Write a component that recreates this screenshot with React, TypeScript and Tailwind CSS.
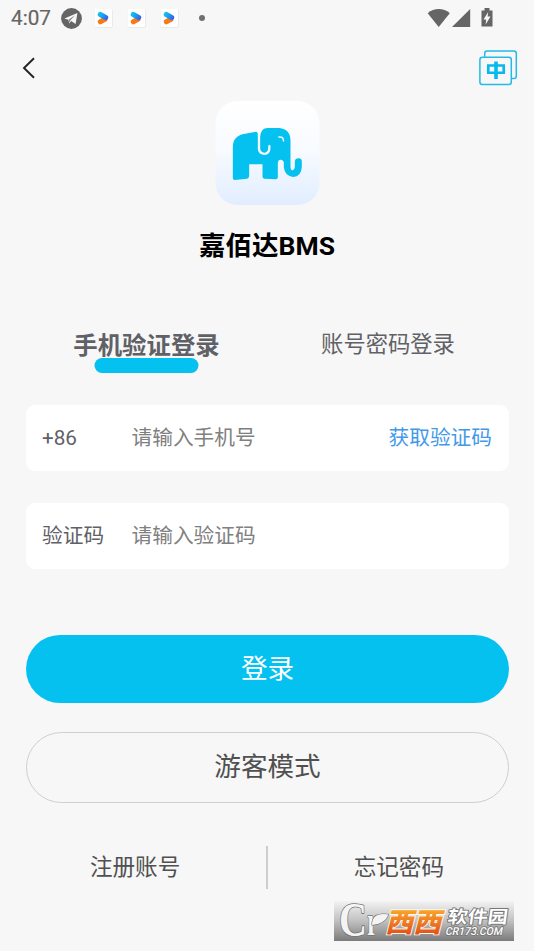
import React from "react";

const FONT = "font-['Roboto','Noto_Sans_CJK_SC',sans-serif]";

function TelegramIcon() {
  return (
    <svg className="ml-[10px] h-[21px] w-[21px]" viewBox="0 0 21 21">
      <circle cx="10.5" cy="10.5" r="10.4" fill="#656565" />
      <path d="M3.4 10.4 16.4 5 14.6 16 10.2 13 8.3 15.400 7.4 11.8Z" fill="#f7f7f7" />
      <path d="M7.8 11.6 14 7.3 9.300 12.5 8.3 15Z" fill="#8a8a8a" />
    </svg>
  );
}

function PlayBadge() {
  return (
    <svg className="h-[19px] w-[19px]" viewBox="0 0 19 19">
      <defs>
        <linearGradient id="play-top" gradientUnits="userSpaceOnUse" x1="4" y1="4" x2="14" y2="10">
          <stop offset="0" stopColor="#12c9f2" />
          <stop offset="0.5" stopColor="#189cf2" />
          <stop offset="1" stopColor="#3a55ee" />
        </linearGradient>
      </defs>
      <rect x="0.5" y="0.5" width="18" height="18" rx="1" fill="#dedede" />
      <rect x="0.5" y="0" width="17.500" height="18" rx="1" fill="#fff" />
      <path d="M6.300 12.800 11 10.200" stroke="#f97a12" strokeWidth="5" strokeLinecap="round" />
      <path d="M6.300 5.500 11.600 8.500" stroke="url(#play-top)" strokeWidth="5.200" strokeLinecap="round" />
      <path d="M8.600 9.200 12 8.700V10Z" fill="#2b78ef" />
    </svg>
  );
}

function StatusBar() {
  return (
    <div className="flex h-9 items-center pl-[11px] pr-[40px] text-[#656565]">
      <span className="w-[40px] whitespace-nowrap pt-px text-[20.7px] leading-none [-webkit-text-stroke:0.2px_#656565]">4:07</span>
      <TelegramIcon />
      <div className="ml-[12px] mt-px flex gap-[14px]">
        <PlayBadge />
        <PlayBadge />
        <PlayBadge />
      </div>
      <span className="ml-[20px] h-[6px] w-[6px] rounded-full bg-[#707070]" />
      <svg className="ml-auto h-[20px] w-[67px]" viewBox="0 0 67 20" fill="#656565">
        <path d="M0.7 5.200C7 -0.400 16.500 -0.400 22.800 5.200L11.700 19Z" />
        <path d="M25 19 43.200 1V19Z" />
        <path d="M54.500 2.600H57.500V0H62.500V2.600H65.500V18.400H54.500Z" />
        <path d="M61.200 4 56.500 11.500H59.200L58.600 16.500 63.500 8.500H60.600Z" fill="#f7f7f7" />
      </svg>
    </div>
  );
}

function TopNav() {
  return (
    <div className="flex h-[65px] items-start justify-between pl-[22px] pr-[16px]">
      <svg className="mt-[21px] h-[22px] w-[14px]" viewBox="0 0 14 22" fill="none" stroke="#222" strokeWidth="1.9">
        <path d="M12 1.300 2 11 12 20.800" />
      </svg>
      <svg className="mt-[14px] h-[36px] w-[39px]" viewBox="0 0 39 36" fill="none" stroke="#22bbe6" strokeWidth="1.500">
        <path d="M5.700 6.800V3.500Q5.700 1 8.200 1H34.800Q37.300 1 37.300 3.500V26.200Q37.300 28.500 34.800 28.500H32.500" />
        <rect x="0.900" y="7.300" width="31.400" height="27.200" rx="2.500" />
        <path d="M9.300 15.500H24.700V22.700H9.300Z" strokeWidth="2.600" stroke="#04b9ef" />
        <path d="M17 11.500V29" strokeWidth="3.600" stroke="#04b9ef" />
      </svg>
    </div>
  );
}

function ElephantLogo() {
  return (
    <div className="mx-auto h-[104px] w-[104px] translate-x-[0.500px] rounded-[22px] bg-linear-to-b from-[#ffffff] via-[#f7faff] to-[#e1edff]">
      <svg className="h-[104px] w-[104px]" viewBox="32 33 312 312">
        <path
          fill="#05c1f0"
          d="M84 171Q84 136 121 131L154 125Q159 126 159 132V178Q160 193 178 195Q197 194 197 173V169Q197 164 193 164Q190 165 190 171Q191 188 179 188Q166 187 166 175V139Q169 114 188 114H223Q257 117 257 153V230Q257 241 264 241Q269 240 270 231V215Q271 205 281 205Q291 205 291 215V231Q289 260 265 261Q240 259 237 232V217Q235 208 227 209Q219 210 219 220V262Q219 268 213 268L178 266Q173 265 173 260V223H133V257Q133 264 127 266L90 270Q84 270 84 264Z"
        />
        <path d="M222 141Q236 139 236 153" fill="none" stroke="#e9faff" strokeWidth="4.500" strokeLinecap="round" />
      </svg>
    </div>
  );
}

function Tabs() {
  return (
    <div className="mt-[70px] flex h-[74px] px-[26px] text-[#606166]">
      <div className="flex flex-1 flex-col items-center pr-[1px]">
        <span className="h-[27px] translate-x-[0.500px] text-[24.400px] font-bold leading-[29px]">手机验证登录</span>
        <span className="h-[15px] w-[104px] translate-x-[0.500px] rounded-full bg-[#05c1f0]" />
      </div>
      <div className="flex flex-1 flex-col items-center pl-px">
        <span className="text-[22.300px] leading-[27px]">账号密码登录</span>
      </div>
    </div>
  );
}

function Field({ label, hint, action }: { label: string; hint: string; action?: string }) {
  return (
    <div className="flex h-[66px] items-center rounded-[9px] bg-white pl-4 pr-[17px] text-[20.700px] leading-none">
      <span className="w-[89.500px] text-[#606166]">{label}</span>
      <span className="flex-1 text-[#808080]">{hint}</span>
      {action && <span className="text-[#4299ea]">{action}</span>}
    </div>
  );
}

function Watermark() {
  return (
    <svg className="absolute left-[334px] top-[901px] h-[40px] w-[180px] overflow-visible" viewBox="0 0 180 40">
      <defs>
        <linearGradient id="mark-bg" x1="0" y1="0" x2="0" y2="1">
          <stop offset="0" stopColor="#f3f3f3" />
          <stop offset="0.500" stopColor="#c0c0c0" />
          <stop offset="1" stopColor="#7b7b7b" />
        </linearGradient>
        <linearGradient id="mark-orange" x1="0" y1="0" x2="0" y2="1">
          <stop offset="0.200" stopColor="#f9ab2c" />
          <stop offset="0.900" stopColor="#e24a18" />
        </linearGradient>
      </defs>
      <rect width="180" height="40" fill="url(#mark-bg)" />
      <g fill="#f4f4f4" stroke="#747474" strokeWidth="1.600" paintOrder="stroke" strokeLinejoin="round">
        <text x="5" y="35" fontFamily="Liberation Serif, serif" fontSize="48" fontWeight="700" textLength="28" lengthAdjust="spacingAndGlyphs">C</text>
        <text x="33" y="34" fontFamily="Liberation Serif, serif" fontSize="40" fontWeight="700" textLength="11" lengthAdjust="spacingAndGlyphs">r</text>
        <path d="M38 24Q38 11 54.500 13.500Q51 23 38 24Z" strokeWidth="1.200" />
      </g>
      <text transform="translate(51 31) skewX(-14)" fontFamily="Noto Sans CJK SC, sans-serif" fontWeight="900" fontSize="27" textLength="56" lengthAdjust="spacingAndGlyphs" fill="url(#mark-orange)" stroke="#fff8ed" strokeWidth="1.800" paintOrder="stroke">西西</text>
      <g fill="#fff" stroke="#777" strokeWidth="1.800" paintOrder="stroke" strokeLinejoin="round">
        <text transform="translate(113 22) skewX(-8)" fontFamily="Noto Sans CJK SC, sans-serif" fontWeight="700" fontSize="17.500" textLength="60" lengthAdjust="spacingAndGlyphs">软件园</text>
        <text transform="translate(111 34) skewX(-12)" fontFamily="Roboto, sans-serif" fontWeight="500" fontSize="11" textLength="57" lengthAdjust="spacingAndGlyphs">CR173.COM</text>
      </g>
    </svg>
  );
}

export default function App() {
  return (
    <main className={`relative h-[951px] w-[534px] overflow-hidden bg-[#f7f7f7] ${FONT}`}>
      <StatusBar />
      <TopNav />
      <ElephantLogo />
      <h1 className="mt-[25px] h-[31px] text-center text-[26.500px] font-bold leading-[31px] text-black">嘉佰达BMS</h1>
      <Tabs />
      <div className="flex flex-col gap-8 pl-[26px] pr-[25px]">
        <Field label="+86" hint="请输入手机号" action="获取验证码" />
        <Field label="验证码" hint="请输入验证码" />
      </div>
      <div className="mt-[66px] flex flex-col gap-[29px] pl-[26px] pr-[25px] text-[26.600px] leading-none">
        <button className="h-[68px] rounded-full bg-[#05c1f0] text-white">登录</button>
        <button className="h-[71px] rounded-full border-[1.500px] border-[#cfcfcf] text-[#505050]">游客模式</button>
      </div>
      <div className="mt-[43px] flex h-[43px] items-center text-[22.600px] leading-none text-[#505050]">
        <span className="flex-1 pl-1 pt-[2px] text-center">注册账号</span>
        <span className="h-full w-[1.500px] bg-[#cdcdcd]" />
        <span className="flex-1 pr-1 pt-[2px] text-center">忘记密码</span>
      </div>
      <Watermark />
    </main>
  );
}
